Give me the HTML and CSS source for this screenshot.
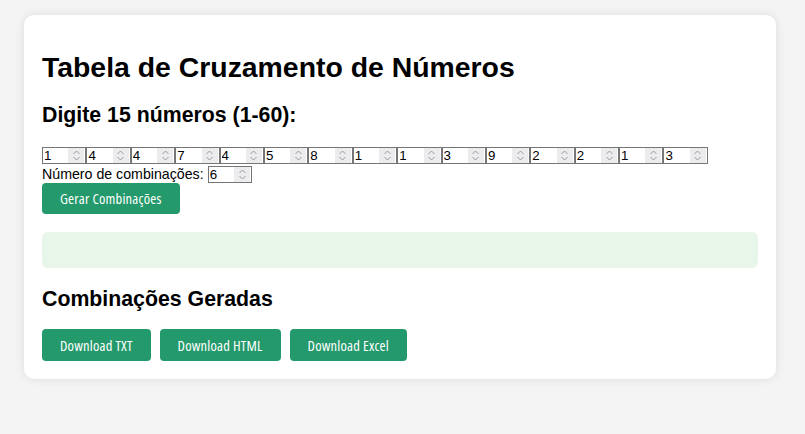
FILE: index.html
```html
<!DOCTYPE html>
<html lang="pt">
<head>
<meta charset="utf-8">
<title>Tabela de Cruzamento de Números</title>
<link rel="stylesheet" href="styles.css">
</head>
<body>
<div class="container">
  <h1>Tabela de Cruzamento de Números</h1>
  <h2>Digite 15 números (1-60):</h2>
  <div class="nums">
    <span class="num"><input type="text" value="1"><span class="spin"><svg viewBox="0 0 9 13" width="9" height="13"><path d="M1.5 5 L4.5 2 L7.5 5 M1.5 8 L4.5 11 L7.5 8"/></svg></span></span>
    <span class="num"><input type="text" value="4"><span class="spin"><svg viewBox="0 0 9 13" width="9" height="13"><path d="M1.5 5 L4.5 2 L7.5 5 M1.5 8 L4.5 11 L7.5 8"/></svg></span></span>
    <span class="num"><input type="text" value="4"><span class="spin"><svg viewBox="0 0 9 13" width="9" height="13"><path d="M1.5 5 L4.5 2 L7.5 5 M1.5 8 L4.5 11 L7.5 8"/></svg></span></span>
    <span class="num"><input type="text" value="7"><span class="spin"><svg viewBox="0 0 9 13" width="9" height="13"><path d="M1.5 5 L4.5 2 L7.5 5 M1.5 8 L4.5 11 L7.5 8"/></svg></span></span>
    <span class="num"><input type="text" value="4"><span class="spin"><svg viewBox="0 0 9 13" width="9" height="13"><path d="M1.5 5 L4.5 2 L7.5 5 M1.5 8 L4.5 11 L7.5 8"/></svg></span></span>
    <span class="num"><input type="text" value="5"><span class="spin"><svg viewBox="0 0 9 13" width="9" height="13"><path d="M1.5 5 L4.5 2 L7.5 5 M1.5 8 L4.5 11 L7.5 8"/></svg></span></span>
    <span class="num"><input type="text" value="8"><span class="spin"><svg viewBox="0 0 9 13" width="9" height="13"><path d="M1.5 5 L4.5 2 L7.5 5 M1.5 8 L4.5 11 L7.5 8"/></svg></span></span>
    <span class="num"><input type="text" value="1"><span class="spin"><svg viewBox="0 0 9 13" width="9" height="13"><path d="M1.5 5 L4.5 2 L7.5 5 M1.5 8 L4.5 11 L7.5 8"/></svg></span></span>
    <span class="num"><input type="text" value="1"><span class="spin"><svg viewBox="0 0 9 13" width="9" height="13"><path d="M1.5 5 L4.5 2 L7.5 5 M1.5 8 L4.5 11 L7.5 8"/></svg></span></span>
    <span class="num"><input type="text" value="3"><span class="spin"><svg viewBox="0 0 9 13" width="9" height="13"><path d="M1.5 5 L4.5 2 L7.5 5 M1.5 8 L4.5 11 L7.5 8"/></svg></span></span>
    <span class="num"><input type="text" value="9"><span class="spin"><svg viewBox="0 0 9 13" width="9" height="13"><path d="M1.5 5 L4.5 2 L7.5 5 M1.5 8 L4.5 11 L7.5 8"/></svg></span></span>
    <span class="num"><input type="text" value="2"><span class="spin"><svg viewBox="0 0 9 13" width="9" height="13"><path d="M1.5 5 L4.5 2 L7.5 5 M1.5 8 L4.5 11 L7.5 8"/></svg></span></span>
    <span class="num"><input type="text" value="2"><span class="spin"><svg viewBox="0 0 9 13" width="9" height="13"><path d="M1.5 5 L4.5 2 L7.5 5 M1.5 8 L4.5 11 L7.5 8"/></svg></span></span>
    <span class="num"><input type="text" value="1"><span class="spin"><svg viewBox="0 0 9 13" width="9" height="13"><path d="M1.5 5 L4.5 2 L7.5 5 M1.5 8 L4.5 11 L7.5 8"/></svg></span></span>
    <span class="num"><input type="text" value="3"><span class="spin"><svg viewBox="0 0 9 13" width="9" height="13"><path d="M1.5 5 L4.5 2 L7.5 5 M1.5 8 L4.5 11 L7.5 8"/></svg></span></span>
  </div>
  <div class="combo">
    <label class="combo-label">Número de combinações:</label>
    <span class="num"><input type="text" value="6"><span class="spin"><svg viewBox="0 0 9 13" width="9" height="13"><path d="M1.5 5 L4.5 2 L7.5 5 M1.5 8 L4.5 11 L7.5 8"/></svg></span></span>
  </div>
  <button class="btn btn-main" type="button">Gerar Combinações</button>
  <div class="result"></div>
  <h2 class="h2-results">Combinações Geradas</h2>
  <div class="downloads">
    <button class="btn" type="button">Download TXT</button>
    <button class="btn" type="button">Download HTML</button>
    <button class="btn" type="button">Download Excel</button>
  </div>
</div>
</body>
</html>
```
FILE: styles.css
```css
html, body {
  margin: 0;
  padding: 0;
}
body {
  background: #f4f4f4;
  font-family: "Liberation Sans", Arial, sans-serif;
  font-size: 14.2px;
  color: #000;
  padding-top: 15px;
  height: 434px;
  box-sizing: border-box;
}
.container {
  width: 752px;
  margin-left: 24px;
  background: #fff;
  border-radius: 10px;
  box-shadow: 0 0 10px rgba(0, 0, 0, 0.1);
  padding: 1px 18px 18px;
  box-sizing: border-box;
}
h1 {
  font-size: 2em;
  line-height: 33px;
  margin: 35px 0 19px;
}
h2 {
  font-size: 1.5em;
  line-height: 25px;
  margin: 18px 0;
}
.h2-results {
  margin: 0 0 17px;
}
.nums {
  display: flex;
  margin-top: 19px;
}
.num {
  display: inline-flex;
  align-items: stretch;
  width: 44.4px;
  height: 17px;
  border: 1px solid #767676;
  box-sizing: border-box;
  background: #fff;
  vertical-align: middle;
}
.num input {
  flex: 1;
  min-width: 0;
  border: 0;
  padding: 0 0 0 1px;
  margin: 0;
  font-family: "Liberation Sans", Arial, sans-serif;
  font-size: 13.3px;
  line-height: 15px;
  height: 15px;
  color: #000;
  background: transparent;
  outline: none;
}
.spin {
  width: 16px;
  margin: 0 1px 0 0;
  background: #ececef;
  display: flex;
  align-items: center;
  justify-content: center;
}
.spin svg {
  fill: none;
  stroke: #9a9aa0;
  stroke-width: 1;
}
.combo {
  display: flex;
  align-items: center;
  height: 18px;
  margin-top: 1px;
}
.combo-label {
  margin-right: 4px;
}
.btn {
  background: #24996b;
  color: #fff;
  border: 0;
  border-radius: 4px;
  font-family: "Open Sans", sans-serif;
  font-stretch: 80%;
  font-size: 14.5px;
  letter-spacing: 0.2px;
  height: 31px;
  padding: 0 18px;
  margin: 0;
  cursor: pointer;
}
.btn-main {
  display: block;
}
.result {
  background: #e8f5e9;
  border-radius: 6px;
  height: 36px;
  margin: 18px 0 19px;
}
.downloads {
  display: flex;
  gap: 9px;
}
.downloads .btn {
  height: 32px;
}
```
